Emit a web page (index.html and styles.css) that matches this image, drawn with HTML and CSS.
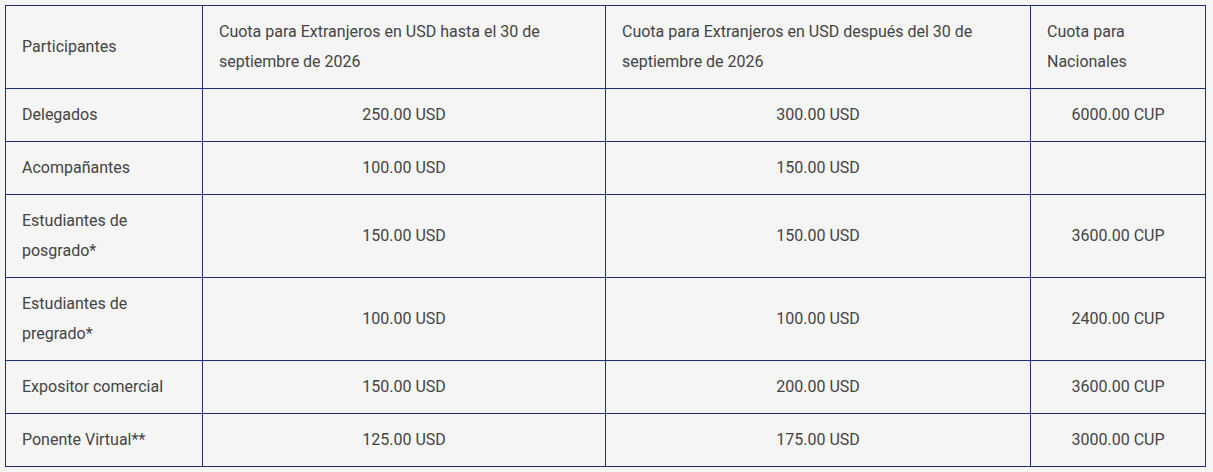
FILE: index.html
```html
<!DOCTYPE html>
<html lang="es">
<head>
<meta charset="utf-8">
<title>Cuotas</title>
<link rel="stylesheet" href="styles.css">
</head>
<body>
<table class="fees">
  <colgroup>
    <col class="c1"><col class="c2"><col class="c3"><col class="c4">
  </colgroup>
  <thead>
    <tr>
      <th>Participantes</th>
      <th>Cuota para Extranjeros en USD hasta el 30 de septiembre de 2026</th>
      <th>Cuota para Extranjeros en USD después del 30 de septiembre de 2026</th>
      <th>Cuota para Nacionales</th>
    </tr>
  </thead>
  <tbody>
    <tr><td>Delegados</td><td>250.00 USD</td><td>300.00 USD</td><td>6000.00 CUP</td></tr>
    <tr><td>Acompañantes</td><td>100.00 USD</td><td>150.00 USD</td><td></td></tr>
    <tr><td>Estudiantes de posgrado*</td><td>150.00 USD</td><td>150.00 USD</td><td>3600.00 CUP</td></tr>
    <tr><td>Estudiantes de pregrado*</td><td>100.00 USD</td><td>100.00 USD</td><td>2400.00 CUP</td></tr>
    <tr><td>Expositor comercial</td><td>150.00 USD</td><td>200.00 USD</td><td>3600.00 CUP</td></tr>
    <tr><td>Ponente Virtual**</td><td>125.00 USD</td><td>175.00 USD</td><td>3000.00 CUP</td></tr>
  </tbody>
</table>
</body>
</html>
```
FILE: styles.css
```css
html, body {
  margin: 0;
  padding: 0;
  background: #f5f5f5;
}
body {
  padding: 5px;
  font-family: Roboto, "Liberation Sans", sans-serif;
  font-size: 16px;
  color: #444444;
}
.fees {
  border-collapse: collapse;
  table-layout: fixed;
  width: 1200px;
  background: #f5f5f5;
}
.c1 { width: 197px; }
.c2 { width: 403px; }
.c3 { width: 425px; }
.c4 { width: 175px; }
.fees th,
.fees td {
  border: 1px solid #1f2f73;
  padding: 11px 16px;
  line-height: 30px;
  font-weight: 400;
  text-align: left;
  vertical-align: middle;
}
.fees td {
  text-align: center;
}
.fees td:first-child {
  text-align: left;
}
```
